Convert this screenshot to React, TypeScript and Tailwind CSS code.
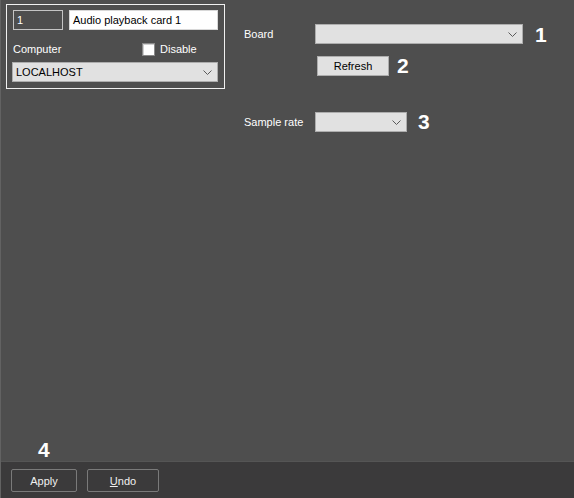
const font = { fontFamily: '"Liberation Sans", Arial, sans-serif' };

function Chevron() {
  return (
    <svg width="9" height="5" viewBox="0 0 9 5" className="shrink-0">
      <path d="M0.5 0.5 L4.5 4.5 L8.5 0.5" fill="none" stroke="#5a5a5a" strokeWidth="1" />
    </svg>
  );
}

function Combo({ w, value }: { w: string; value?: string }) {
  return (
    <div className={`${w} h-[20px] bg-[#e1e1e1] border border-[#adadad] flex items-center justify-between pl-[3px] pr-[5px] text-black`}>
      <span>{value}</span>
      <Chevron />
    </div>
  );
}

function Mark({ n, cls }: { n: string; cls: string }) {
  return <div className={`${cls} h-[20px] leading-[20px] text-white font-bold text-[21px]`}>{n}</div>;
}

export default function App() {
  return (
    <div style={font} className="w-[574px] h-[498px] flex flex-col bg-[#4e4e4e] text-[11px] leading-[14px] text-white border-l border-[#626262]">
      <div className="flex-1 flex pl-[5px] pt-[4px]">
        <div className="w-[219px] h-[85px] border border-[#f0f0f0] px-[6px] pt-[5px] flex flex-col">
          <div className="flex gap-[6px]">
            <div className="w-[50px] h-[20px] border border-[#c4c4c4] flex items-center pl-[3px] text-white">1</div>
            <div className="w-[149px] h-[20px] bg-white border border-[#d8d8d8] flex items-center pl-[3px] text-black">
              Audio playback card 1
            </div>
          </div>
          <div className="flex items-center h-[14px] mt-[12px]">
            <span className="w-[129px]">Computer</span>
            <div className="w-[13px] h-[13px] bg-white border border-[#8a8a8a] shadow-[inset_1px_1px_0_#d0d0d0]" />
            <span className="ml-[5px]">Disable</span>
          </div>
          <div className="mt-[6px] -ml-[1px]">
            <Combo w="w-[206px]" value="LOCALHOST" />
          </div>
        </div>
        <div className="ml-[19px] pt-[19px] flex flex-col">
          <div className="flex items-center">
            <span className="w-[71px]">Board</span>
            <Combo w="w-[208px]" />
            <Mark n="1" cls="ml-[12px] mt-[2px]" />
          </div>
          <div className="flex items-center mt-[11px] pl-[73px]">
            <div className="w-[72px] h-[20px] bg-[#e1e1e1] border border-[#adadad] flex items-center justify-center text-black">
              Refresh
            </div>
            <Mark n="2" cls="ml-[8px]" />
          </div>
          <div className="flex items-center mt-[36px]">
            <span className="w-[71px]">Sample rate</span>
            <Combo w="w-[92px]" />
            <Mark n="3" cls="ml-[11px]" />
          </div>
        </div>
      </div>
      <div className="h-[21px] pl-[37px]">
        <Mark n="4" cls="" />
      </div>
      <div className="h-[37px] bg-[#3b3a3b] border-t border-[#555555] flex gap-[10px] pl-[10px] pt-[7px]">
        <div className="w-[66px] h-[23px] border border-[#7a7a7a] rounded-[2px] flex items-center justify-center text-[#f0f0f0]">
          Apply
        </div>
        <div className="w-[72px] h-[23px] border border-[#7a7a7a] rounded-[2px] flex items-center justify-center text-[#f0f0f0]">
          <span><span className="underline">U</span>ndo</span>
        </div>
      </div>
    </div>
  );
}
